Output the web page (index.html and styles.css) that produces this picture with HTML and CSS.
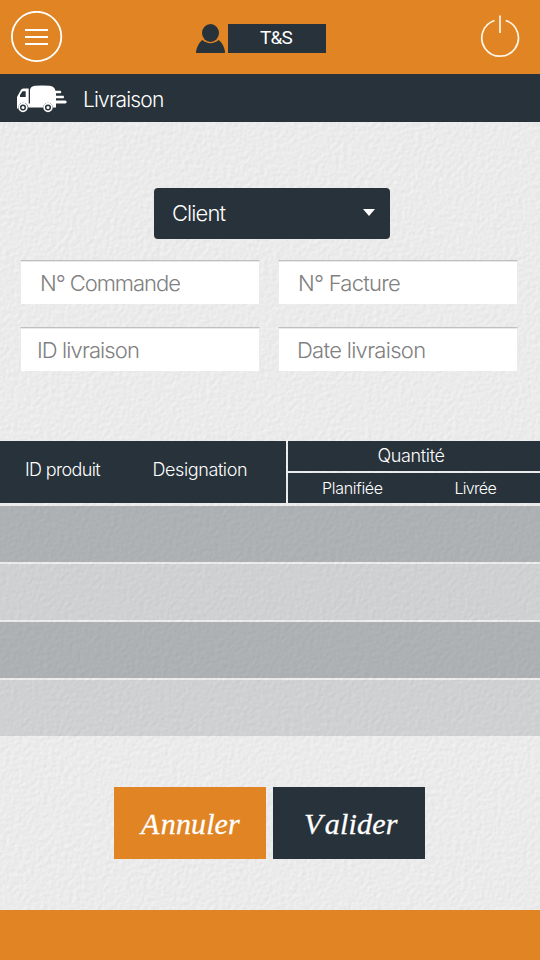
FILE: index.html
```html
<!DOCTYPE html>
<html lang="fr">
<head>
<meta charset="utf-8">
<title>Livraison</title>
<link rel="stylesheet" href="styles.css">
</head>
<body>
<div class="app">
  <svg class="paper" width="540" height="960" aria-hidden="true">
    <filter id="grain" x="0" y="0" width="100%" height="100%" color-interpolation-filters="sRGB">
      <feTurbulence type="fractalNoise" baseFrequency="0.24" numOctaves="2" seed="4" result="n"/>
      <feDiffuseLighting in="n" surfaceScale="0.1" diffuseConstant="1.305" lighting-color="#ebebeb">
        <feDistantLight azimuth="225" elevation="50"/>
      </feDiffuseLighting>
    </filter>
    <rect width="540" height="960" filter="url(#grain)"/>
  </svg>
  <header class="topbar">
    <svg class="menu" width="52" height="52" viewBox="0 0 52 52" fill="none" stroke="#fff" stroke-width="2">
      <circle cx="25.600" cy="25.500" r="24.700" stroke-width="1.800"/>
      <path d="M14 19h23M14 26h23M14 33h23"/>
    </svg>
    <div class="user">
      <svg width="30" height="30" viewBox="0 0 30 30" fill="#27323a">
        <ellipse cx="14.500" cy="9" rx="8.500" ry="9"/>
        <path d="M0 29C.3 23.500 3 18.500 6.500 16C11 20.200 18 20.200 22.500 16C26 18.500 29 23.500 29 29Z"/>
      </svg>
      <span class="user-name"><span>T&amp;S</span></span>
    </div>
    <svg class="power" width="40" height="44" viewBox="0 0 40 44" fill="none" stroke="#fff5e6" stroke-width="1.700">
      <path d="M14.500 5.500A18.300 18.300 0 1 0 25.700 5.500"/>
      <path d="M20 .5V18"/>
    </svg>
  </header>
  <div class="titlebar">
    <svg class="truck" width="50" height="28" viewBox="0 0 50 28" fill="#fff">
      <path d="M0 23.500V12L4 4.700Q5 3.500 7 3.500H11.700V18.500H13V5Q13.500 1.200 18 .8Q25 0 32.500 .8Q37.500 1.200 38.500 5.700H43.500Q45 7 43.500 8.300H39V10.700H46.500Q47.500 12 46.500 13.300H39V15.500H48.500Q51 17 48.500 18.500H39V22.500H36Q35 17.800 31 17.800T26 22.500H11.500Q10.500 17.800 6 17.800T1 23.500Z"/>
      <path d="M3 12V10L5.500 6.300H8.700V12Z" fill="#27323a"/>
      <circle cx="6" cy="22.500" r="4.700"/><circle cx="31" cy="22.500" r="4.700"/>
      <g fill="#fff" stroke="#27323a" stroke-width="1.500"><circle cx="6" cy="22.500" r="2.300"/><circle cx="31" cy="22.500" r="2.300"/></g>
    </svg>
    <h1>Livraison</h1>
  </div>
  <main>
    <div class="select"><span>Client</span><i class="caret"></i></div>
    <form class="fields">
      <div class="field f1"><span>N° Commande</span></div>
      <div class="field f2"><span>N° Facture</span></div>
      <div class="field f3"><span>ID livraison</span></div>
      <div class="field f4"><span>Date livraison</span></div>
    </form>
    <section class="table">
      <div class="thead">
        <div class="cols"><span class="c-id">ID produit</span><span class="c-des">Designation</span></div>
        <div class="qty">
          <div class="qty-top"><span>Quantité</span></div>
          <div class="qty-sub"><span class="c-plan">Planifiée</span><span class="c-liv">Livrée</span></div>
        </div>
      </div>
      <div class="row dark"></div>
      <div class="row"></div>
      <div class="row dark"></div>
      <div class="row"></div>
    </section>
    <div class="actions">
      <div class="btn cancel"><span><span class="cap-a">A</span>nnuler</span></div>
      <div class="btn ok"><span><span class="cap-v">V</span>alider</span></div>
    </div>
  </main>
  <footer></footer>
</div>
</body>
</html>
```
FILE: styles.css
```css
* { box-sizing: border-box; }
body { margin: 0; font-family: Inter, "Liberation Sans", sans-serif; font-weight: 300; }
.app { position: relative; width: 540px; height: 960px; overflow: hidden; display: flex; flex-direction: column; background: #ebebeb; isolation: isolate; }
.paper { position: absolute; inset: 0; z-index: -1; }
span { white-space: nowrap; }
svg { display: block; flex: none; }
.topbar { height: 74px; background: #e08424; display: flex; align-items: flex-start; padding: 11px 0 0 11px; }
.user { display: flex; gap: 2px; padding-top: 13px; margin-left: 133px; }
.user-name { width: 98px; height: 29px; background: #27323a; color: #fff; padding-left: 32px; font: 400 19px/28px Roboto, "Liberation Sans", sans-serif; letter-spacing: -.8px; }
.power { margin: 4px 0 0 154px; }
.titlebar { height: 48px; background: #27323a; color: #fff; display: flex; align-items: center; padding: 3px 0 0 17px; gap: 16px; }
.truck { margin-top: -2px; }
h1 { margin: 0; font-size: 21px; font-weight: 300; line-height: 28px; letter-spacing: -.85px; }
main { flex: 1; display: flex; flex-direction: column; }
.select { width: 236px; height: 51px; margin: 66px 0 0 154px; background: #27323a; border-radius: 4px; color: #fff; display: flex; align-items: center; justify-content: space-between; padding: 0 15px 2px 18px; font-size: 22px; letter-spacing: -.9px; }
.caret { border: 6px solid transparent; border-top: 7px solid #fff; border-bottom: 0; }
.fields { display: grid; grid-template-columns: 240px 240px; gap: 23px 18px; margin: 21px 0 0 20px; }
.field { height: 44px; background: #fff; border: 1px solid #ebebeb; border-top: 1px solid #c0c0c0; border-bottom: 0; box-shadow: inset 0 1px #e8e8e8; color: #808080; font-size: 22px; line-height: 44px; }
.f1 { padding-left: 19px; letter-spacing: -1.05px; }
.f2 { padding-left: 19px; letter-spacing: -.75px; }
.f3 { padding-left: 16px; letter-spacing: -.9px; }
.f4 { padding-left: 18px; letter-spacing: -.7px; }
.table { margin-top: 70px; color: #fff; display: flex; flex-direction: column; gap: 2px; }
.thead { height: 62px; display: flex; gap: 2px; margin-bottom: 1px; font-size: 18px; }
.cols { width: 286px; background: #27323a; display: flex; line-height: 58px; padding-left: 25px; }
.c-id { width: 127.5px; letter-spacing: -.65px; }
.c-des { letter-spacing: -.4px; }
.qty { flex: 1; display: flex; flex-direction: column; gap: 2px; }
.qty-top { height: 30px; line-height: 30px; background: #27323a; padding-left: 89.5px; letter-spacing: -.35px; }
.qty-sub { height: 30px; line-height: 31px; font-size: 16px; background: #27323a; display: flex; padding-left: 34px; letter-spacing: -.3px; }
.c-plan { width: 132.5px; }
.c-liv { letter-spacing: -.7px; }
.row { height: 56px; background: rgba(39, 50, 58, .14); }
.row.dark { background: rgba(39, 50, 58, .31); }
.actions { display: flex; gap: 7px; margin: 51px 0 0 114px; }
.btn { width: 152px; height: 72px; color: #fff; font: italic 400 30px/73px "Liberation Serif", serif; -webkit-text-stroke: .3px #fff; }
.cancel { background: #e08424; padding-left: 27px; letter-spacing: .1px; }
.ok { background: #27323a; padding-left: 31px; letter-spacing: .2px; }
.cap-a { letter-spacing: 1.5px; }
.cap-v { letter-spacing: 2.5px; }
footer { height: 50px; background: #e08424; }
```
